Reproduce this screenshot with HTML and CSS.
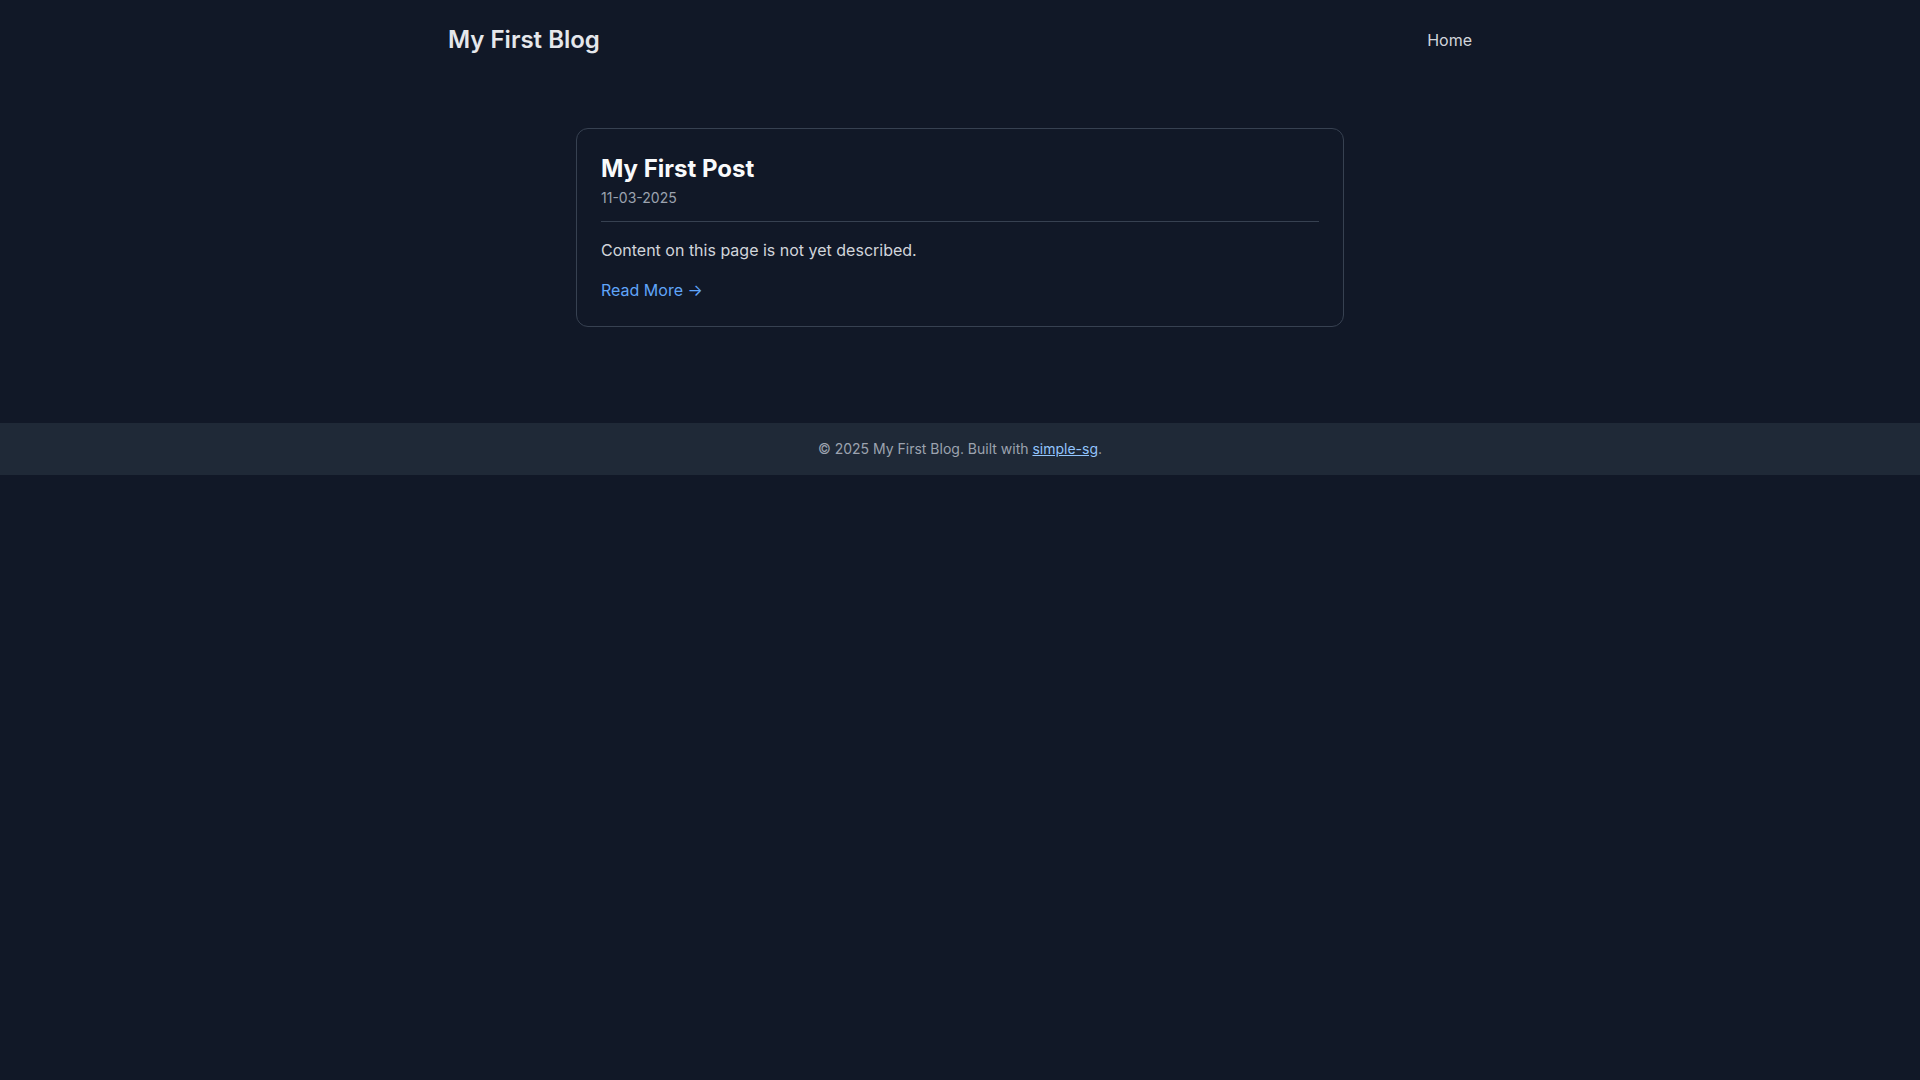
FILE: index.html
```html
<!DOCTYPE html>
<html lang="en">
<head>
<meta charset="utf-8">
<title>My First Blog</title>
<link rel="stylesheet" href="styles.css">
</head>
<body>
<header class="site-header">
  <div class="container header-inner">
    <a class="brand" href="#">My First Blog</a>
    <nav class="nav"><a href="#">Home</a></nav>
  </div>
</header>
<main class="main">
  <article class="card">
    <div class="card-head">
      <h2 class="post-title">My First Post</h2>
      <div class="post-date">11-03-2025</div>
    </div>
    <p class="post-excerpt">Content on this page is not yet described.</p>
    <a class="read-more" href="#">Read More →</a>
  </article>
</main>
<footer class="site-footer">
  © 2025 My First Blog. Built with <a href="#">simple-sg</a>.
</footer>
</body>
</html>
```
FILE: styles.css
```css
* { box-sizing: border-box; }
html, body { margin: 0; padding: 0; }
body {
  background: #111827;
  color: #d1d5db;
  font-family: Inter, "Noto Sans", "Liberation Sans", sans-serif;
  min-height: 100vh;
}
a { text-decoration: none; }
.container {
  width: 1024px;
  margin: 0 auto;
}
.site-header { padding: 24px 0; }
.header-inner {
  display: flex;
  align-items: center;
  justify-content: space-between;
}
.brand {
  font-size: 24px;
  line-height: 32px;
  font-weight: 600;
  color: #e5e7eb;
}
.nav a {
  font-size: 16px;
  line-height: 24px;
  color: #d1d5db;
}
.main {
  padding: 48px 0;
}
.card {
  width: 768px;
  margin: 0 auto;
  border: 1px solid #374151;
  border-radius: 12px;
  padding: 24px;
}
.card-head {
  border-bottom: 1px solid #374151;
  padding-bottom: 13px;
}
.post-title {
  margin: 0;
  font-size: 24px;
  line-height: 32px;
  font-weight: 700;
  color: #f9fafb;
}
.post-date {
  margin-top: 3px;
  font-size: 14px;
  line-height: 20px;
  color: #9ca3af;
}
.post-excerpt {
  margin: 16px 0 16px;
  font-size: 16px;
  line-height: 24px;
  color: #d1d5db;
}
.read-more {
  display: block;
  font-size: 16px;
  line-height: 24px;
  color: #60a5fa;
}
.site-footer {
  margin-top: 48px;
  background: #1f2937;
  padding: 16px 0;
  text-align: center;
  font-size: 14px;
  line-height: 20px;
  color: #9ca3af;
}
.site-footer a {
  color: #93c5fd;
  text-decoration: underline;
}
```
